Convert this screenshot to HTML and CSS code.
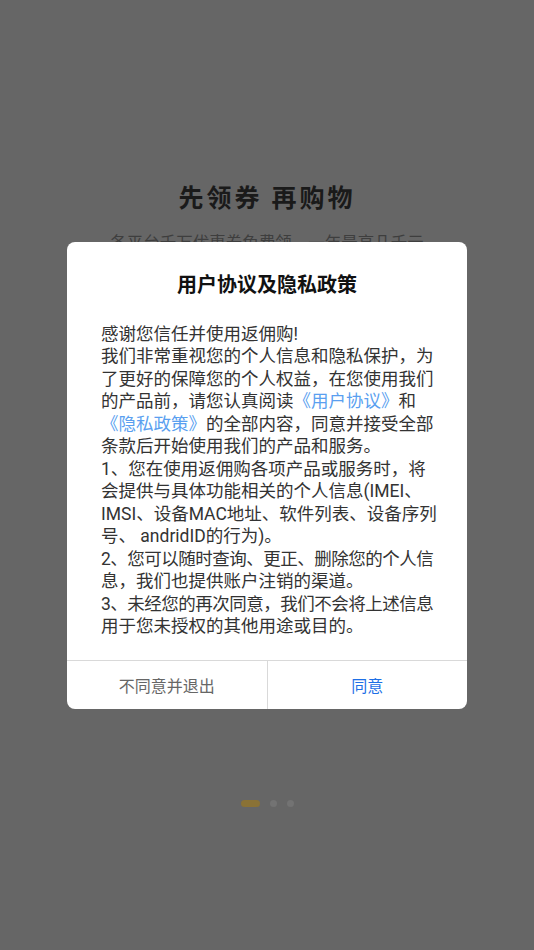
FILE: index.html
```html
<!DOCTYPE html>
<html lang="zh-CN">
<head>
<meta charset="utf-8">
<title>返佣购</title>
<link rel="stylesheet" href="styles.css">
</head>
<body>
<div class="page">
  <div class="guide">
    <h1 class="guide-title">先领券 再购物</h1>
    <p class="guide-sub">各平台千万优惠券免费领，一年最高几千元</p>
  </div>
  <div class="dots">
    <span class="dot dot-active"></span>
    <span class="dot"></span>
    <span class="dot"></span>
  </div>
</div>
<div class="overlay">
  <div class="dialog">
    <h2 class="dialog-title">用户协议及隐私政策</h2>
    <div class="dialog-body">感谢您信任并使用返佣购!<br>我们非常重视您的个人信息和隐私保护，为<br>了更好的保障您的个人权益，在您使用我们<br>的产品前，请您认真阅读<span class="link">《用户协议》</span>和<br><span class="link">《隐私政策》</span>的全部内容，同意并接受全部<br>条款后开始使用我们的产品和服务。<br>1、您在使用返佣购各项产品或服务时，将<br>会提供与具体功能相关的个人信息(IMEI、<br>IMSI、设备MAC地址、软件列表、设备序列<br>号、 andridID的行为)。<br><span class="tight">2、您可以随时查询、更正、删除您的个人信</span><br>息，我们也提供账户注销的渠道。<br><span class="tight">3、未经您的再次同意，我们不会将上述信息</span><br>用于您未授权的其他用途或目的。</div>
    <div class="dialog-actions">
      <button class="btn btn-cancel">不同意并退出</button>
      <button class="btn btn-ok">同意</button>
    </div>
  </div>
</div>
</body>
</html>
```
FILE: styles.css
```css
html, body {
  margin: 0;
  padding: 0;
}
body {
  width: 534px;
  height: 950px;
  background: #666666;
  font-family: Roboto, "Noto Sans CJK SC", sans-serif;
  overflow: hidden;
  position: relative;
}
.page {
  display: flex;
  flex-direction: column;
  align-items: center;
  height: 950px;
}
.guide {
  padding-top: 183px;
  display: flex;
  flex-direction: column;
  align-items: center;
}
.guide-title {
  margin: 0;
  font-size: 25px;
  line-height: 32px;
  font-weight: 700;
  letter-spacing: 3px;
  color: #1a1a1a;
}
.guide-sub {
  margin: 18px 0 0;
  font-size: 16.5px;
  line-height: 22px;
  color: #3e3e3e;
}
.dots {
  margin-top: 545px;
  display: flex;
  gap: 10px;
  align-items: center;
}
.dot {
  width: 7px;
  height: 7px;
  border-radius: 50%;
  background: #737373;
}
.dot-active {
  width: 19px;
  border-radius: 4px;
  background: #8a7236;
}
.overlay {
  position: absolute;
  inset: 0;
  display: flex;
  align-items: center;
  justify-content: center;
}
.dialog {
  width: 400px;
  background: #ffffff;
  border-radius: 8px;
  display: flex;
  flex-direction: column;
  overflow: hidden;
}
.dialog-title {
  margin: 30px 0 0;
  font-size: 20px;
  line-height: 26px;
  font-weight: 700;
  text-align: center;
  color: #111111;
}
.dialog-body {
  margin: 25px 26px 22px 34px;
  font-size: 17.5px;
  line-height: 22.5px;
  color: #333333;
  white-space: nowrap;
}
.tight {
  letter-spacing: -0.5px;
}
.link {
  color: #5a9ff0;
}
.dialog-actions {
  display: flex;
  border-top: 1px solid #d9d9d9;
  height: 48px;
}
.btn {
  flex: 1;
  border: 0;
  background: transparent;
  font-family: inherit;
  font-size: 16px;
  padding: 0;
}
.btn-cancel {
  color: #666666;
  border-right: 1px solid #d9d9d9;
}
.btn-ok {
  color: #1e6fe6;
}
```
